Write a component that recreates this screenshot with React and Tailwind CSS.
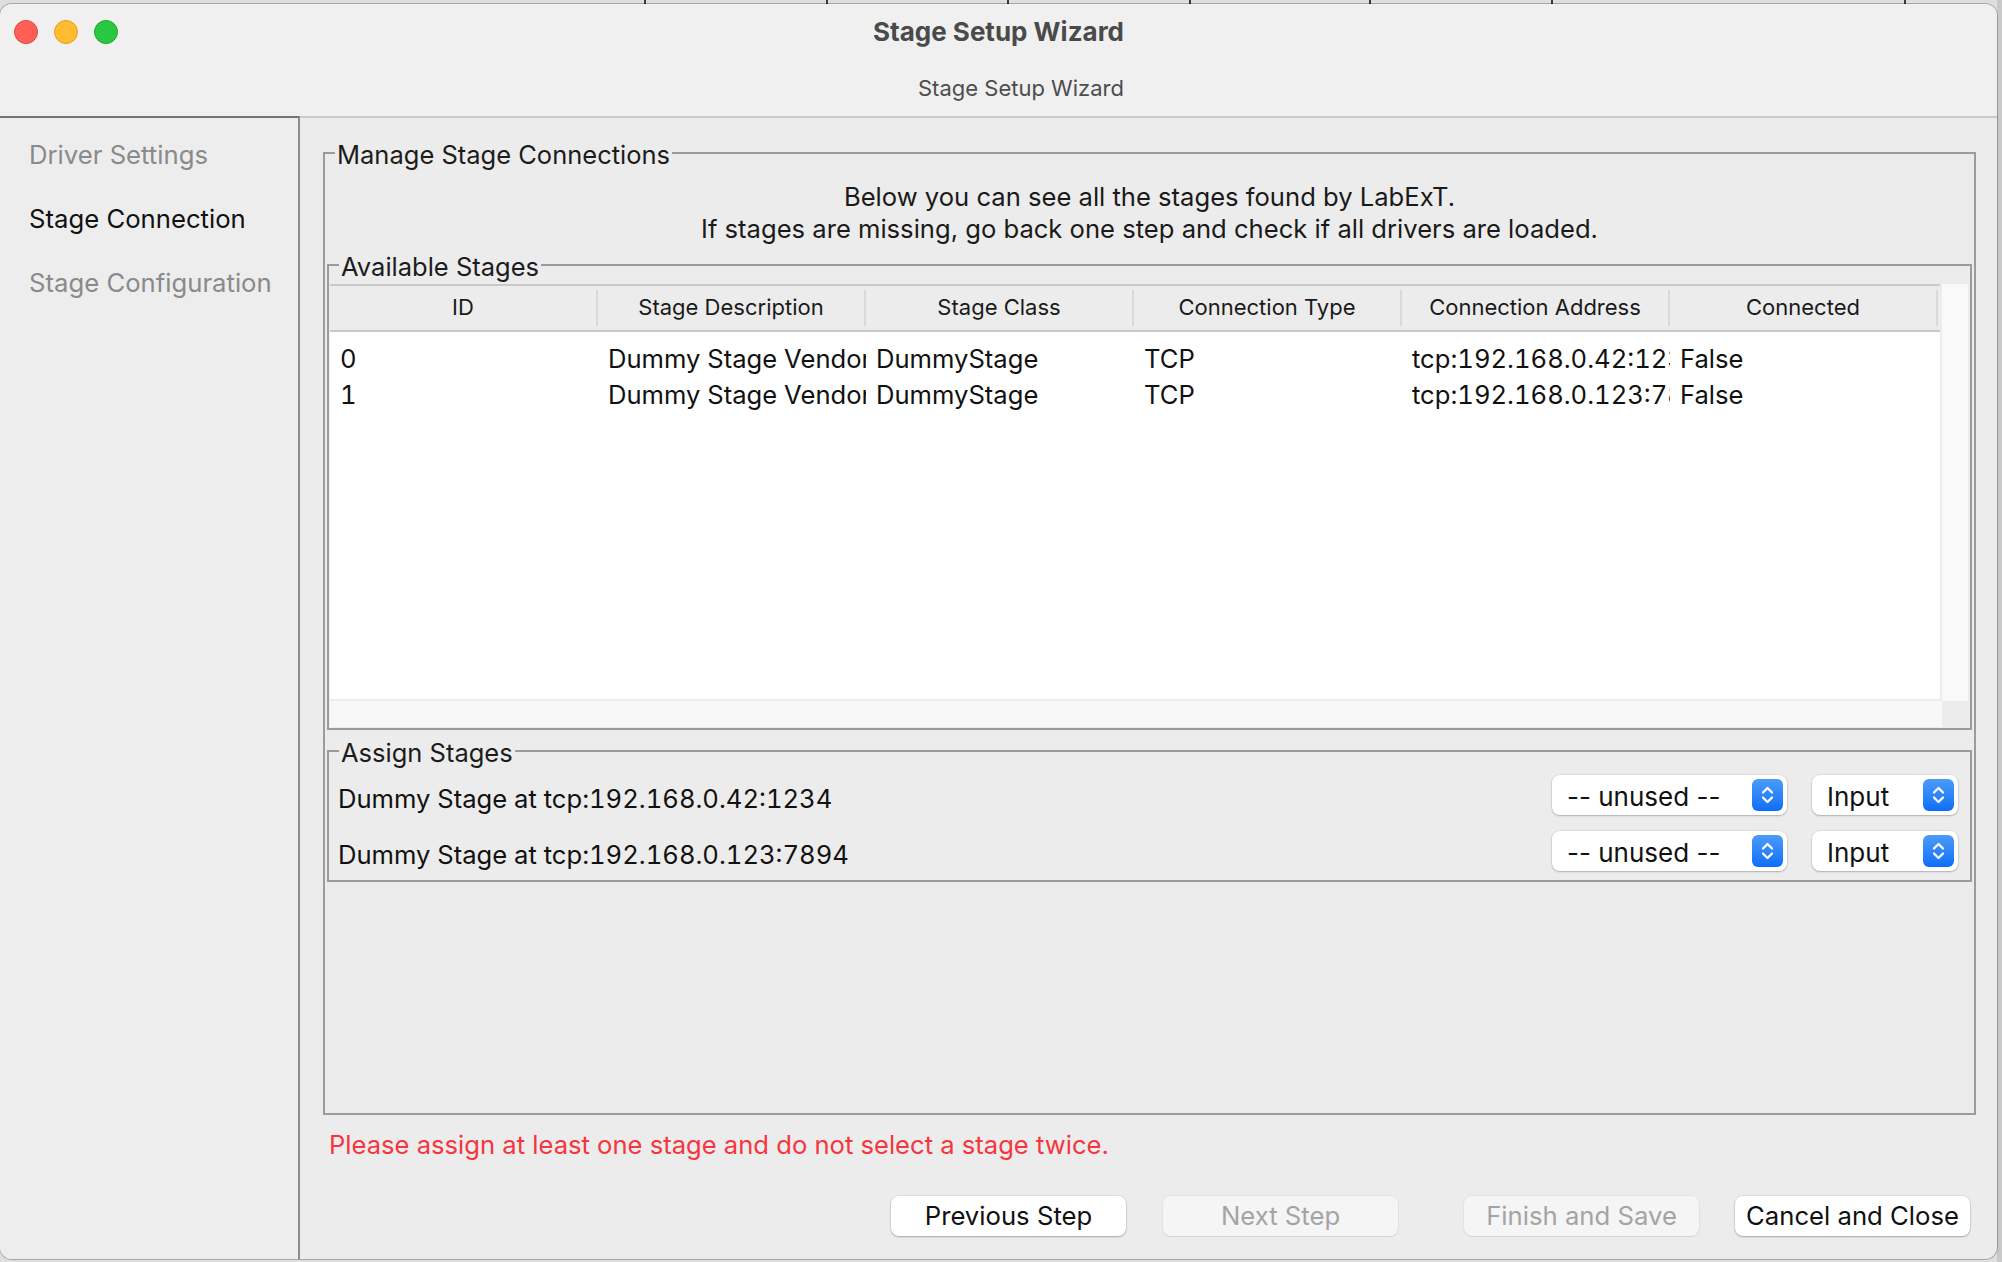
import React from "react";
import clsx from "clsx";

const columns = ["ID", "Stage Description", "Stage Class", "Connection Type", "Connection Address", "Connected"];

const stages = [
    ["0", "Dummy Stage Vendor", "DummyStage", "TCP", "tcp:192.168.0.42:1234", "False"],
    ["1", "Dummy Stage Vendor", "DummyStage", "TCP", "tcp:192.168.0.123:7894", "False"],
];

const steps = [
    { name: "Driver Settings", active: false },
    { name: "Stage Connection", active: true },
    { name: "Stage Configuration", active: false },
];

// little marks of the windows lying behind this one
const ticks = [644, 826, 1007, 1189, 1369, 1551, 1904];

function GroupBox({ title, className, children }) {
    return (
        <fieldset className={clsx("min-w-0 border-2 border-[#9b9b9b]", className)}>
            <legend className="ml-[10px] px-[2px] pt-[5px] text-[25.5px] leading-[24px] text-[#1c1c1c]">{title}</legend>
            {children}
        </fieldset>
    );
}

function Chevrons() {
    return (
        <svg width="31" height="32" viewBox="0 0 31 32" fill="none" stroke="white" strokeWidth="2.3" strokeLinecap="round" strokeLinejoin="round">
            <path d="M11 13.5 L15.5 9 L20 13.5" />
            <path d="M11 18.5 L15.5 23 L20 18.5" />
        </svg>
    );
}

function Combo({ value, width }) {
    return (
        <div className={clsx(width, "flex h-[40px] items-center justify-between rounded-[8px] bg-white pl-[15px] pr-[4px] shadow-[0_0_0_1px_rgba(0,0,0,0.05),0_1px_2px_rgba(0,0,0,0.22)]")}>
            <span className="pt-[2px] text-[26px] text-[#111]">{value}</span>
            <span className="flex h-[32px] w-[31px] items-center justify-center rounded-[6px] bg-linear-to-b from-[#4a9bf9] to-[#0a6ef6]">
                <Chevrons />
            </span>
        </div>
    );
}

function Button({ label, disabled, className }) {
    return (
        <button
            disabled={disabled}
            className={clsx(
                "h-[40px] w-[235px] rounded-[8px] text-[25.7px]",
                disabled
                    ? "bg-[#f5f5f5] text-[#a4a4a4] shadow-[0_0_0_1px_rgba(0,0,0,0.03),0_1px_1px_rgba(0,0,0,0.08)]"
                    : "bg-white text-[#111] shadow-[0_0_0_1px_rgba(0,0,0,0.05),0_1px_2px_rgba(0,0,0,0.25)]",
                className
            )}
        >
            {label}
        </button>
    );
}

export default function App() {
    return (
        <div className="relative h-[1262px] w-[2002px] overflow-hidden bg-[#dedede] pt-[4px] font-[family-name:Inter,'Liberation_Sans',sans-serif]">
            {ticks.map((x) => (
                <div key={x} className="absolute top-0 h-[4px] w-[2px] bg-[#3a3a3a]" style={{ left: x }} />
            ))}
            <div className="absolute right-0 top-0 h-full w-[5px] bg-[#c9c9c9]" />

            <div className="relative flex h-[1255px] w-[1997px] flex-col overflow-hidden rounded-[12px] bg-[#ececec] shadow-[0_0_0_1px_rgba(0,0,0,0.25)]">
                {/* title bar */}
                <div className="h-[112px] bg-[#f0f0f0]">
                    <div className="grid h-[56px] grid-cols-[1fr_auto_1fr] items-center">
                        <div className="flex gap-[16px] pl-[14px]">
                            <span className="h-[24px] w-[24px] rounded-full border border-[#e0443e] bg-[#ff5f57]" />
                            <span className="h-[24px] w-[24px] rounded-full border border-[#dea123] bg-[#febc2e]" />
                            <span className="h-[24px] w-[24px] rounded-full border border-[#1aab29] bg-[#28c840]" />
                        </div>
                        <h1 className="pb-[2px] text-[26px] font-bold text-[#4a4a4a]">Stage Setup Wizard</h1>
                        <div />
                    </div>
                    <div className="flex h-[56px] items-center justify-center pl-[45px]">
                        <span className="text-[22px] text-[#4d4d4d]">Stage Setup Wizard</span>
                    </div>
                </div>

                <div className="flex flex-1">
                    {/* steps */}
                    <div className="w-[300px] border-r-2 border-t-2 border-r-[#8c8c8c] border-t-[#747474] bg-[#ededed] pt-[5px]">
                        {steps.map((step) => (
                            <div key={step.name} className={clsx("flex h-[64px] items-center pl-[29px] text-[25.7px]", step.active ? "text-[#111]" : "text-[#8a8a8a]")}>
                                {step.name}
                            </div>
                        ))}
                    </div>

                    {/* page */}
                    <div className="flex flex-1 flex-col border-t-2 border-[#cacaca] pb-[23px] pl-[23px] pr-[21px] pt-[20px]">
                        <GroupBox title="Manage Stage Connections" className="flex flex-1 flex-col">
                            <div className="mt-[14px] text-center text-[25.6px] leading-[32px] text-[#1a1a1a]">
                                <p>Below you can see all the stages found by LabExT.</p>
                                <p>If stages are missing, go back one step and check if all drivers are loaded.</p>
                            </div>

                            <GroupBox title="Available Stages" className="mx-[2px] mt-[5px]">
                                <div className="mb-[1px] ml-[1px] mr-[2px] mt-[5px] grid h-[443px] grid-cols-[1fr_26px] grid-rows-[1fr_26px]">
                                    <div className="flex flex-col border-r-2 border-[#ececec] bg-white">
                                        <div className="flex h-[48px] items-center border-y-2 border-[#c9c9c9] bg-[#ececec]">
                                            {columns.map((col) => (
                                                <div key={col} className="flex items-center">
                                                    <div className="flex w-[266px] justify-center pb-[2px] text-[22px] text-[#1a1a1a]">{col}</div>
                                                    <div className="h-[36px] w-[2px] bg-[#d9d9d9]" />
                                                </div>
                                            ))}
                                        </div>
                                        <div className="flex-1 border-b-2 border-[#ececec] pt-[9px] tabular-nums">
                                            {stages.map((row) => (
                                                <div key={row[0]} className="flex h-[36px] items-center">
                                                    {row.map((cell, i) => (
                                                        <div key={i} className="w-[268px] overflow-hidden whitespace-nowrap pl-[10px] pr-[4px] text-[25.6px] text-[#111]">
                                                            {cell}
                                                        </div>
                                                    ))}
                                                </div>
                                            ))}
                                        </div>
                                    </div>
                                    <div className="bg-[#f9f9f9]" />
                                    <div className="bg-[#f8f8f8]" />
                                    <div className="bg-[#ececec]" />
                                </div>
                            </GroupBox>

                            <GroupBox title="Assign Stages" className="mx-[2px] mt-[6px]">
                                <div className="mt-[2px] pb-[1px] pl-[9px] pr-[12px]">
                                    {stages.map((row) => (
                                        <div key={row[0]} className="flex h-[56px] items-center justify-between">
                                            <span className="pt-[8px] text-[25.6px] text-[#111] tabular-nums">Dummy Stage at {row[4]}</span>
                                            <div className="flex gap-[25px]">
                                                <Combo value="-- unused --" width="w-[235px]" />
                                                <Combo value="Input" width="w-[146px]" />
                                            </div>
                                        </div>
                                    ))}
                                </div>
                            </GroupBox>
                        </GroupBox>

                        <p className="mt-[15px] h-[30px] pl-[6px] text-[25.6px] leading-[30px] text-[#f5363e]">
                            Please assign at least one stage and do not select a stage twice.
                        </p>

                        <div className="mt-[36px] flex justify-end pr-[6px]">
                            <Button label="Previous Step" />
                            <Button label="Next Step" disabled className="ml-[37px]" />
                            <Button label="Finish and Save" disabled className="ml-[66px]" />
                            <Button label="Cancel and Close" className="ml-[36px]" />
                        </div>
                    </div>
                </div>
            </div>
        </div>
    );
}
